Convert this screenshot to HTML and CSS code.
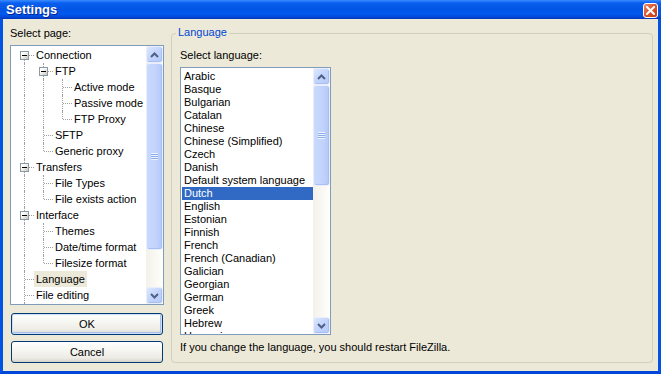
FILE: index.html
```html
<!DOCTYPE html>
<html>
<head>
<meta charset="utf-8">
<title>Settings</title>
<link rel="stylesheet" href="styles.css">
</head>
<body>
<div class="window">
  <div class="titlebar">
    <span class="title">Settings</span>
    <span class="close"><svg width="9" height="9" viewBox="0 0 9 9"><path d="M1 1 L8 8 M8 1 L1 8" stroke="#fff" stroke-width="2" stroke-linecap="square"/></svg></span>
  </div>
  <div class="client">
    <div class="left">
      <div class="label">Select page:</div>
      <div class="tree">
        <div class="tree-items">
          <div class="row"><span class="cell f"><i class="pm"></i></span><span class="text">Connection</span></div>
          <div class="row"><span class="cell v"></span><span class="cell t"><i class="pm"></i></span><span class="text">FTP</span></div>
          <div class="row"><span class="cell v"></span><span class="cell v"></span><span class="cell t"></span><span class="text">Active mode</span></div>
          <div class="row"><span class="cell v"></span><span class="cell v"></span><span class="cell t"></span><span class="text">Passive mode</span></div>
          <div class="row"><span class="cell v"></span><span class="cell v"></span><span class="cell l"></span><span class="text">FTP Proxy</span></div>
          <div class="row"><span class="cell v"></span><span class="cell t"></span><span class="text">SFTP</span></div>
          <div class="row"><span class="cell v"></span><span class="cell l"></span><span class="text">Generic proxy</span></div>
          <div class="row"><span class="cell t"><i class="pm"></i></span><span class="text">Transfers</span></div>
          <div class="row"><span class="cell v"></span><span class="cell t"></span><span class="text">File Types</span></div>
          <div class="row"><span class="cell v"></span><span class="cell l"></span><span class="text">File exists action</span></div>
          <div class="row"><span class="cell t"><i class="pm"></i></span><span class="text">Interface</span></div>
          <div class="row"><span class="cell v"></span><span class="cell t"></span><span class="text">Themes</span></div>
          <div class="row"><span class="cell v"></span><span class="cell t"></span><span class="text">Date/time format</span></div>
          <div class="row"><span class="cell v"></span><span class="cell l"></span><span class="text">Filesize format</span></div>
          <div class="row"><span class="cell t"></span><span class="text sel">Language</span></div>
          <div class="row"><span class="cell t"></span><span class="text">File editing</span></div>
          <div class="row"><span class="cell v"></span></div>
        </div>
        <div class="vscroll">
          <div class="sbtn"><svg width="9" height="6" viewBox="0 0 9 6"><path d="M1 5 L4.5 1.5 L8 5" fill="none" stroke="#4D6185" stroke-width="2"/></svg></div>
          <div class="thumb thumb-tree"><span class="grip"></span></div>
          <div class="track"></div>
          <div class="sbtn"><svg width="9" height="6" viewBox="0 0 9 6"><path d="M1 1 L4.5 4.5 L8 1" fill="none" stroke="#4D6185" stroke-width="2"/></svg></div>
        </div>
      </div>
      <button class="btn btn-default">OK</button>
      <button class="btn">Cancel</button>
    </div>
    <div class="group">
      <div class="legend">Language</div>
      <div class="label">Select language:</div>
      <div class="listbox">
        <ul class="list">
          <li>Arabic</li>
          <li>Basque</li>
          <li>Bulgarian</li>
          <li>Catalan</li>
          <li>Chinese</li>
          <li>Chinese (Simplified)</li>
          <li>Czech</li>
          <li>Danish</li>
          <li>Default system language</li>
          <li class="sel">Dutch</li>
          <li>English</li>
          <li>Estonian</li>
          <li>Finnish</li>
          <li>French</li>
          <li>French (Canadian)</li>
          <li>Galician</li>
          <li>Georgian</li>
          <li>German</li>
          <li>Greek</li>
          <li>Hebrew</li>
          <li>Hungarian</li>
        </ul>
        <div class="vscroll">
          <div class="sbtn"><svg width="9" height="6" viewBox="0 0 9 6"><path d="M1 5 L4.5 1.5 L8 5" fill="none" stroke="#4D6185" stroke-width="2"/></svg></div>
          <div class="thumb thumb-list"><span class="grip"></span></div>
          <div class="track"></div>
          <div class="sbtn"><svg width="9" height="6" viewBox="0 0 9 6"><path d="M1 1 L4.5 4.5 L8 1" fill="none" stroke="#4D6185" stroke-width="2"/></svg></div>
        </div>
      </div>
      <div class="hint">If you change the language, you should restart FileZilla.</div>
    </div>
  </div>
</div>
</body>
</html>
```
FILE: styles.css
```css
html, body {
  margin: 0;
  padding: 0;
  background: #ECE9D8;
}
.window {
  width: 661px;
  height: 374px;
  overflow: hidden;
  display: flex;
  flex-direction: column;
  font-family: "Liberation Sans", Arial, sans-serif;
  font-size: 11px;
  color: #000;
}
.titlebar {
  height: 19px;
  flex: none;
  display: flex;
  align-items: center;
  justify-content: space-between;
  padding: 0 3px 0 6px;
  background: linear-gradient(to bottom, #3A8CFF 0px, #0A5FEF 3px, #0055E5 9px, #0058EE 14px, #0049D8 17px, #0033B8 19px);
}
.title {
  color: #fff;
  font-weight: bold;
  font-size: 13px;
  text-shadow: 1px 1px 0 #0B1F8E;
  line-height: 19px;
}
.close {
  width: 13px;
  height: 13px;
  border: 1px solid #fff;
  border-radius: 3px;
  background: linear-gradient(135deg, #E88E70 0%, #D9582F 45%, #C43C16 100%);
  display: flex;
  align-items: center;
  justify-content: center;
  margin-top: 1px;
}
.client {
  flex: 1;
  display: flex;
  align-items: flex-start;
  padding: 8px 5px 0 7px;
  border-left: 3px solid #0053E4;
  border-right: 3px solid #0053E4;
  border-bottom: 3px solid #0046D8;
  background: #ECE9D8;
}
.left {
  width: 154px;
  flex: none;
  display: flex;
  flex-direction: column;
}
.label {
  line-height: 13px;
  height: 13px;
  margin-bottom: 5px;
}
.tree {
  height: 258px;
  border: 1px solid #7F9DB9;
  background: #fff;
  display: flex;
  margin-bottom: 8px;
}
.tree-items {
  flex: 1;
  overflow: hidden;
  padding: 1px 0 0 4px;
}
.row {
  display: flex;
  height: 16px;
  white-space: nowrap;
}
.cell {
  position: relative;
  width: 19px;
  height: 16px;
  flex: none;
}
.cell::before,
.cell::after {
  content: "";
  position: absolute;
}
.cell.v::before,
.cell.t::before {
  left: 9px;
  top: 0;
  height: 16px;
  border-left: 1px dotted #A0A0A0;
}
.cell.l::before {
  left: 9px;
  top: 0;
  height: 8px;
  border-left: 1px dotted #A0A0A0;
}
.cell.f::before {
  left: 9px;
  top: 8px;
  height: 8px;
  border-left: 1px dotted #A0A0A0;
}
.cell.t::after,
.cell.l::after,
.cell.f::after {
  left: 10px;
  top: 8px;
  width: 9px;
  border-top: 1px dotted #A0A0A0;
}
.pm {
  position: absolute;
  left: 5px;
  top: 4px;
  width: 7px;
  height: 7px;
  border: 1px solid #8A9AA8;
  background: linear-gradient(135deg, #FFFFFF 30%, #C9C5B5 100%);
  z-index: 1;
}
.pm::after {
  content: "";
  position: absolute;
  left: 1px;
  top: 3px;
  width: 5px;
  height: 1px;
  background: #000;
}
.text {
  line-height: 16px;
  padding: 0 2px;
}
.text.sel {
  background: #ECE9D8;
}
.vscroll {
  width: 17px;
  flex: none;
  display: flex;
  flex-direction: column;
  background: linear-gradient(to right, #F3F1EA, #FEFEFB);
}
.sbtn {
  height: 15px;
  flex: none;
  border: 1px solid #E8EEFD;
  border-radius: 3px;
  background: linear-gradient(135deg, #DCE7FE 0%, #C3D4FC 50%, #B4CAF9 100%);
  display: flex;
  align-items: center;
  justify-content: center;
  box-shadow: inset -1px -1px 0 #A9BFF2;
}
.thumb {
  flex: none;
  border: 1px solid #E8EEFD;
  border-radius: 3px;
  background: linear-gradient(to right, #CADAFD 0%, #C1D3FC 60%, #B3C8F8 100%);
  box-shadow: inset -1px -1px 0 #A9BFF2;
  display: flex;
  align-items: center;
  justify-content: center;
}
.thumb-tree {
  height: 185px;
}
.thumb-list {
  height: 99px;
}
.grip {
  width: 7px;
  height: 7px;
  background: repeating-linear-gradient(to bottom, #EEF4FE 0px, #EEF4FE 1px, #8CABEF 1px, #8CABEF 2px);
}
.track {
  flex: 1;
}
.btn {
  display: block;
  width: 152px;
  height: 22px;
  margin: 0 0 6px 1px;
  padding: 0;
  border: 1px solid #003C74;
  border-radius: 3px;
  background: linear-gradient(to bottom, #FFFFFF 0%, #F6F6F2 40%, #ECEBE5 80%, #D8D3C8 100%);
  font-family: "Liberation Sans", Arial, sans-serif;
  font-size: 11px;
  color: #000;
}
.btn-default {
  box-shadow: inset 0 0 0 1px #CFDDF7, inset -1px -1px 0 1px #A9C0EE;
}
.group {
  position: relative;
  width: 472px;
  height: 313px;
  margin: 6px 0 0 7px;
  border: 1px solid #D0D0BF;
  border-radius: 4px;
  padding: 15px 0 0 8px;
  box-sizing: content-box;
}
.legend {
  position: absolute;
  left: 4px;
  top: -8px;
  padding: 0 2px;
  line-height: 13px;
  color: #0046D5;
  background: #ECE9D8;
}
.listbox {
  width: 149px;
  height: 266px;
  border: 1px solid #7F9DB9;
  background: #fff;
  display: flex;
}
.list {
  flex: 1;
  margin: 0;
  padding: 2px 0 0 1px;
  list-style: none;
  overflow: hidden;
}
.list li {
  line-height: 13px;
  height: 13px;
  padding-left: 2px;
  white-space: nowrap;
}
.list li.sel {
  background: #316AC5;
  color: #fff;
}
.hint {
  margin-top: 6px;
  line-height: 13px;
}
```
